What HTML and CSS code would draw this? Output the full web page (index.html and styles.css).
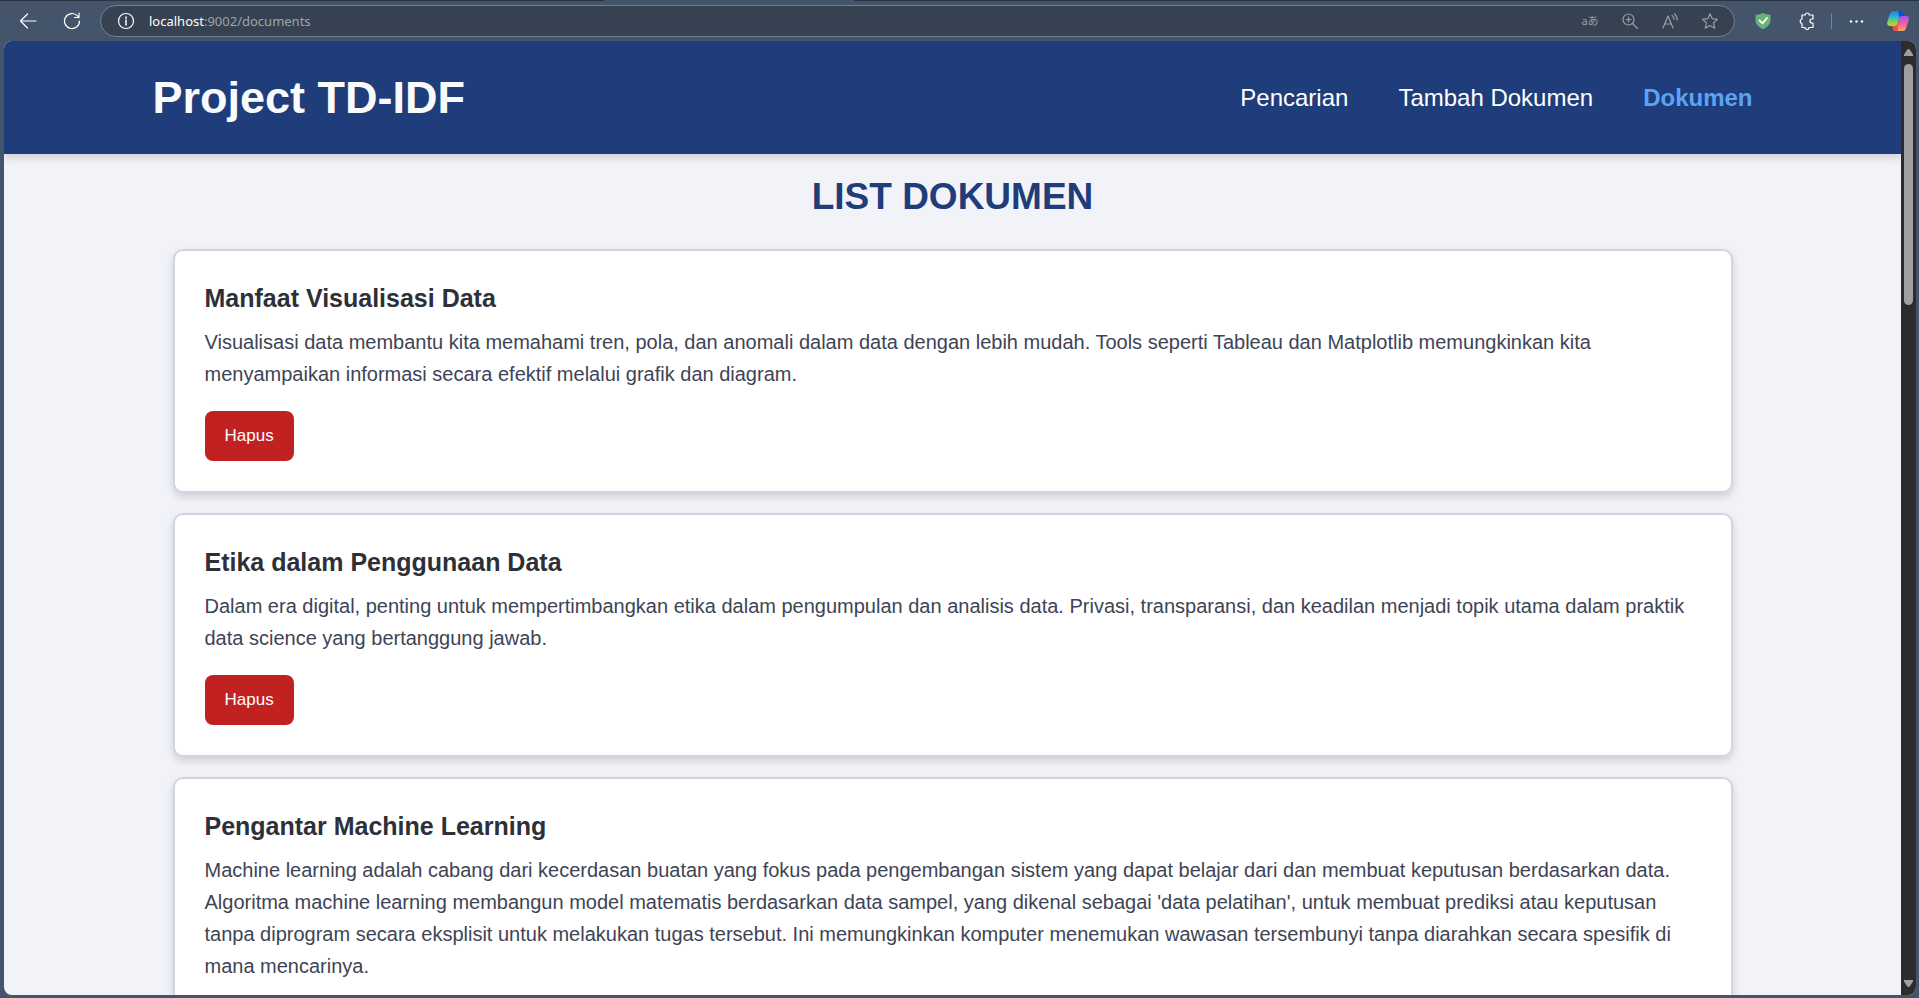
FILE: index.html
```html
<!DOCTYPE html>
<html lang="id">
<head>
<meta charset="utf-8">
<title>Project TD-IDF</title>
<link rel="stylesheet" href="styles.css">
</head>
<body>
<div class="toolbar">
  <div class="tab-edge"><span class="tab-edge-left"></span><span class="tab-edge-active"></span><span class="tab-edge-right"></span></div>
  <div class="toolbar-row">
    <button class="tool" aria-label="Back"><svg width="18" height="18" viewBox="0 0 18 18"><path d="M17 9H1.500M8.500 2L1.500 9l7 7"/></svg></button>
    <button class="tool" aria-label="Refresh"><svg width="18" height="18" viewBox="0 0 18 18"><path d="M16.500 9A7.500 7.500 0 1 1 14.500 3.900L16 5.500M16 1v4.500h-4.500"/></svg></button>
    <div class="address">
      <button class="tool" aria-label="Site information"><svg width="18" height="18" viewBox="0 0 18 18"><circle cx="9" cy="9" r="7.500"/><path d="M9 8v5M9 5v1.300" stroke-width="1.500"/></svg></button>
      <div class="url"><span class="host">localhost</span>:9002/documents</div>
      <div class="address-tools">
        <button class="tool translate" aria-label="Translate">aあ</button>
        <button class="tool" aria-label="Zoom"><svg width="18" height="18" viewBox="0 0 18 18"><circle cx="7.500" cy="7.500" r="5.500"/><path d="M11.500 11.500l5 5M7.500 5v5M5 7.500h5"/></svg></button>
        <button class="tool" aria-label="Read aloud"><svg width="18" height="18" viewBox="0 0 18 18"><path d="M2 16L7 4l5 12M3.700 12h6.600M11 3.500q2 1.500 2 4M13.500 2q3 2.500 2.500 6"/></svg></button>
        <button class="tool" aria-label="Favorite"><svg width="18" height="18" viewBox="0 0 18 18"><path d="M9 1.800l2.200 4.900 5.300.6-4 3.600 1.200 5.300L9 13.500l-4.700 2.700 1.200-5.300-4-3.600 5.300-.6z"/></svg></button>
      </div>
    </div>
    <div class="browser-tools">
      <button class="tool" aria-label="Shield"><svg width="18" height="18" viewBox="0 0 18 18"><path d="M9 1q4 2 7.500 1.600V8q0 6-7.500 9.200Q1.500 14 1.500 8V2.600Q5 3 9 1z" fill="#67b279" stroke="none"/><path d="M5.500 8.300l3 3 4.500-5.300" stroke="#fff" stroke-width="1.800"/></svg></button>
      <button class="tool" aria-label="Extensions"><svg width="18" height="18" viewBox="0 0 18 18"><path d="M4 3h3.200a2 2 0 0 1 4 0H15v4h-1a2 2 0 0 0 0 4h1v4.500h-4a2 2 0 0 1-4 0H4V11.500a2.300 2.300 0 0 1 0-4.500z"/></svg></button>
      <span class="divider"></span>
      <button class="tool" aria-label="Settings and more"><svg width="18" height="18" viewBox="0 0 18 18"><g fill="#fff" stroke="none"><circle cx="4" cy="9.500" r="1.200"/><circle cx="9.500" cy="9.500" r="1.200"/><circle cx="15" cy="9.500" r="1.200"/></g></svg></button>
      <button class="tool" aria-label="Copilot"><svg class="copilot" width="22" height="22" viewBox="0 0 22 22">
        <defs>
          <linearGradient id="cool" x1="0" y1="0" x2="0" y2="1"><stop offset="0" stop-color="#1384e8"/><stop offset=".45" stop-color="#32b9c8"/><stop offset=".75" stop-color="#8fcf4a"/><stop offset="1" stop-color="#f2c11d"/></linearGradient>
          <linearGradient id="warm" x1="0" y1="0" x2="0" y2="1"><stop offset="0" stop-color="#a654ee"/><stop offset=".5" stop-color="#ef5fa4"/><stop offset="1" stop-color="#ffa05a"/></linearGradient>
        </defs>
        <g stroke="none">
          <path d="M6 1h8.500q1.700 0 2.200 2l.8 3h-2.700q-2 0-2.600 2L10.500 14q-.7 2-2.700 2H2.500Q-.5 16 .3 12L3 3.500Q3.800 1 6 1z" fill="url(#cool)"/>
          <path d="M11 1h3.500q1.700 0 2.200 2l.8 3H15q-2 0-2.600 1.500z" fill="#0a50cf"/>
          <path d="M16 21H8.500q-1.700 0-2.200-2l-.8-3h2.700q2 0 2.600-2l1.700-6q.6-2 2.500-2h4.500q3 0 2.200 4L19 18.500q-.8 2.500-3 2.500z" fill="url(#warm)"/>
          <path d="M11 21H8.500q-1.700 0-2.200-2l-.8-3H8q2 0 2.600-1.500z" fill="#f1503c"/>
        </g></svg></button>
    </div>
  </div>
</div>

<div class="viewport">
  <div class="page">
    <header class="site-header">
      <div class="header-inner">
        <h1 class="brand">Project TD-IDF</h1>
        <nav class="nav">
          <a href="#pencarian">Pencarian</a>
          <a href="#tambah">Tambah Dokumen</a>
          <a class="active" href="#dokumen">Dokumen</a>
        </nav>
      </div>
    </header>
    <main class="content">
      <h2 class="page-title">LIST DOKUMEN</h2>
      <article class="card">
        <h3>Manfaat Visualisasi Data</h3>
        <p>Visualisasi data membantu kita memahami tren, pola, dan anomali dalam data dengan lebih mudah. Tools seperti Tableau dan Matplotlib memungkinkan kita menyampaikan informasi secara efektif melalui grafik dan diagram.</p>
        <button class="delete">Hapus</button>
      </article>
      <article class="card">
        <h3>Etika dalam Penggunaan Data</h3>
        <p>Dalam era digital, penting untuk mempertimbangkan etika dalam pengumpulan dan analisis data. Privasi, transparansi, dan keadilan menjadi topik utama dalam praktik data science yang bertanggung jawab.</p>
        <button class="delete">Hapus</button>
      </article>
      <article class="card">
        <h3>Pengantar Machine Learning</h3>
        <p>Machine learning adalah cabang dari kecerdasan buatan yang fokus pada pengembangan sistem yang dapat belajar dari dan membuat keputusan berdasarkan data. Algoritma machine learning membangun model matematis berdasarkan data sampel, yang dikenal sebagai 'data pelatihan', untuk membuat prediksi atau keputusan tanpa diprogram secara eksplisit untuk melakukan tugas tersebut. Ini memungkinkan komputer menemukan wawasan tersembunyi tanpa diarahkan secara spesifik di mana mencarinya.</p>
      </article>
    </main>
  </div>
  <div class="scrollbar">
    <svg width="9" height="7" viewBox="0 0 9 7"><path d="M4.500 0Q5.500 0 6 1l3 4.500V7H0V5.500L3 1Q3.500 0 4.500 0z"/></svg>
    <div class="track"><div class="thumb"></div></div>
    <svg width="9" height="7" viewBox="0 0 9 7"><path d="M4.500 7Q5.500 7 6 6l3-4.500V0H0v1.500L3 6q.5 1 1.500 1z"/></svg>
  </div>
</div>
</body>
</html>
```

FILE: styles.css
```css
* {
  box-sizing: border-box;
}

body {
  margin: 0;
  height: 100vh;
  display: flex;
  flex-direction: column;
  overflow: hidden;
  background: #44546a;
  font-family: "Liberation Sans", Arial, sans-serif;
}

h1, h2, h3, p {
  margin: 0;
}

/* Browser toolbar */
.toolbar {
  flex: none;
  height: 41px;
  display: flex;
  flex-direction: column;
}

.tab-edge {
  display: flex;
  height: 1px;
}

.tab-edge-left {
  flex: 604;
  background: #293241;
}

.tab-edge-active {
  flex: 250;
}

.tab-edge-right {
  flex: 1065;
  background: #293241;
}

.toolbar-row {
  flex: 1;
  display: flex;
  align-items: center;
  padding-left: 19px;
  padding-right: 10px;
  color: #fff;
}

.tool {
  flex: none;
  display: flex;
  align-items: center;
  justify-content: center;
  width: 18px;
  height: 18px;
  padding: 0;
  border: 0;
  background: none;
  color: inherit;
}

.tool svg {
  flex: none;
  fill: none;
  stroke: currentColor;
  stroke-width: 1.2;
  stroke-linejoin: round;
  stroke-linecap: round;
}

.toolbar-row > .tool {
  margin-right: 26px;
}

.address {
  flex: 1;
  display: flex;
  align-items: center;
  height: 32px;
  margin-left: -7px;
  padding: 0 15px 0 16px;
  border: 1px solid #71808f;
  border-radius: 16px;
  background: #364252;
}

.url {
  flex: 1;
  margin-left: 14px;
  font-family: "Noto Sans", sans-serif;
  font-size: 13px;
  color: #a0a3a8;
}

.host {
  color: #fff;
}

.address-tools {
  display: flex;
  gap: 22px;
  color: #9b9fa5;
}

.translate {
  font: 11px/18px "Noto Sans", "Noto Sans CJK JP", sans-serif;
  white-space: nowrap;
}

.browser-tools {
  display: flex;
  align-items: center;
  gap: 15px;
  margin-left: 19px;
}

.browser-tools .tool:first-child {
  margin-right: 11px;
}

.browser-tools .tool:last-child {
  width: 22px;
  margin-left: 7px;
}

.divider {
  width: 1px;
  height: 16px;
  background: #7b8592;
}

/* Web page */
.viewport {
  flex: 1;
  min-height: 0;
  display: flex;
  margin: 0 3px 3px 4px;
  overflow: hidden;
  border-radius: 8px;
  background: #f2f3f8;
}

.page {
  flex: 1;
  overflow: hidden;
}

.site-header {
  padding: 30px 0;
  background: #1f3d7a;
  box-shadow: 0 4px 8px rgba(0, 0, 0, 0.15);
}

.header-inner {
  display: flex;
  align-items: center;
  justify-content: space-between;
  max-width: 1600px;
  margin: 0 auto;
}

.brand {
  font-size: 45px;
  line-height: 53px;
  color: #f9fafc;
}

.nav {
  display: flex;
  gap: 50px;
  font-size: 24px;
}

.nav a {
  color: #fff;
  text-decoration: none;
}

.nav .active {
  font-weight: bold;
  color: #5ba4f5;
}

.content {
  display: flex;
  flex-direction: column;
  gap: 20px;
  max-width: 1600px;
  margin: 0 auto;
  padding: 20px;
}

.page-title {
  margin-bottom: 10px;
  font-size: 37px;
  line-height: 45px;
  text-align: center;
  color: #1f3d7a;
}

.card {
  padding: 30px;
  border: 2px solid #d2d5e0;
  border-radius: 10px;
  background: #fff;
  box-shadow: 0 4px 8px rgba(0, 0, 0, 0.15);
}

.card h3 {
  margin-bottom: 10px;
  font-size: 25px;
  line-height: 35px;
  color: #2d3039;
}

.card p {
  font-size: 20px;
  line-height: 32px;
  color: #3e4456;
}

.delete {
  display: block;
  height: 50px;
  margin-top: 21px;
  padding: 0 20px;
  border: 0;
  border-radius: 8px;
  background: #c22121;
  font-family: inherit;
  font-size: 17px;
  color: #fff;
}

/* Scrollbar */
.scrollbar {
  flex: none;
  display: flex;
  flex-direction: column;
  align-items: center;
  gap: 8px;
  width: 15px;
  padding: 8px 0;
  background: #2c2c2c;
  fill: #9f9f9f;
}

.track {
  flex: 1;
  width: 9px;
}

.thumb {
  height: 26.5%;
  border-radius: 5px;
  background: #9f9f9f;
}
```
